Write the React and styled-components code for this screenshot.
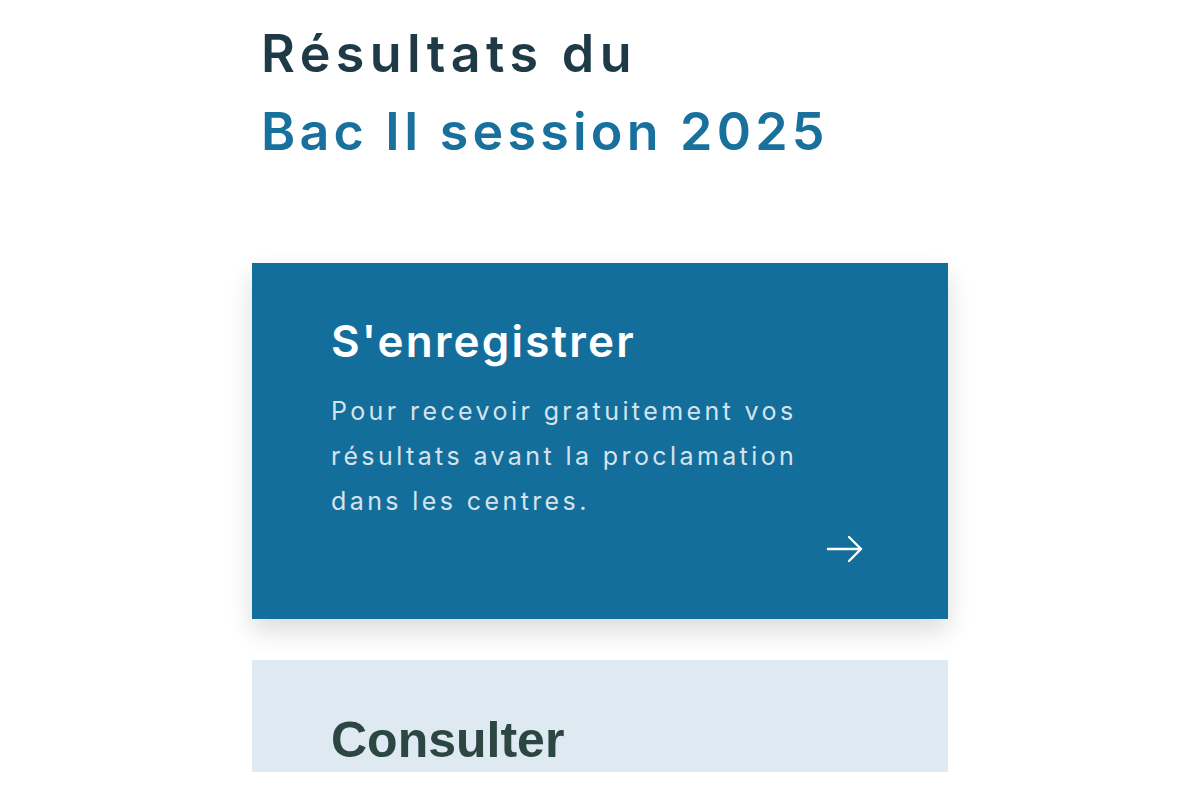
import React from "react";
import styled, { createGlobalStyle } from "styled-components";

const Global = createGlobalStyle`
  html, body { margin: 0; padding: 0; background: #ffffff; }
  body { font-family: Inter, "Open Sans", sans-serif; }
`;

const Page = styled.main`
  width: 696px;
  margin: 0 auto;
  padding-top: 15px;
`;

const Heading = styled.h1`
  margin: 0 0 92px 9px;
  font-family: Inter, sans-serif;
  font-weight: 600;
  font-size: 52px;
  line-height: 78px;
  color: #1f3a47;
`;

const HeadLine = styled.span`
  display: block;
  letter-spacing: ${(p) => p.$tracking}px;
  color: ${(p) => (p.$accent ? "#18709d" : "#1f3a47")};
`;

const Card = styled.section`
  box-sizing: border-box;
  height: ${(p) => p.$h}px;
  padding: ${(p) => p.$pt}px 84px 0 79px;
  background: ${(p) => (p.$primary ? "#146e9b" : "#dfe9f2")};
  box-shadow: ${(p) => (p.$primary ? "0 12px 24px rgba(0,0,0,0.14)" : "none")};
  margin-bottom: 41px;
  display: flex;
  flex-direction: column;
`;

const CardTitle = styled.h2`
  margin: 0;
  font-family: Inter, sans-serif;
  font-weight: 600;
  font-size: 44px;
  line-height: 56px;
  letter-spacing: 2.2px;
  color: #ffffff;
`;

const AltTitle = styled.h2`
  margin: 0;
  font-family: "Liberation Sans", Arial, sans-serif;
  font-weight: 700;
  font-size: 50px;
  line-height: 56px;
  color: #2c4642;
`;

const CardText = styled.p`
  margin: 20px 0 0;
  font-family: Inter, sans-serif;
  font-size: 25px;
  line-height: 45px;
  letter-spacing: 3.4px;
  color: rgba(255, 255, 255, 0.84);
  max-width: 510px;
`;

const ArrowRow = styled.div`
  display: flex;
  justify-content: flex-end;
  margin-top: 11px;
`;

const Arrow = () => (
  <svg width="38" height="28" viewBox="0 0 38 28" fill="none" stroke="#ffffff" strokeWidth="2.4" strokeLinecap="round" strokeLinejoin="round">
    <path d="M2 14h33M23 2l12 12-12 12" />
  </svg>
);

export default function App() {
  return (
    <>
      <Global />
      <Page>
        <Heading>
          <HeadLine $tracking={5.4}>Résultats du</HeadLine>
          <HeadLine $accent $tracking={4.2}>Bac II session 2025</HeadLine>
        </Heading>
        <Card $primary $h={356} $pt={50}>
          <CardTitle>S'enregistrer</CardTitle>
          <CardText>
            Pour recevoir gratuitement vos résultats avant la proclamation dans les centres.
          </CardText>
          <ArrowRow>
            <Arrow />
          </ArrowRow>
        </Card>
        <Card $h={112} $pt={52}>
          <AltTitle>Consulter</AltTitle>
        </Card>
      </Page>
    </>
  );
}
